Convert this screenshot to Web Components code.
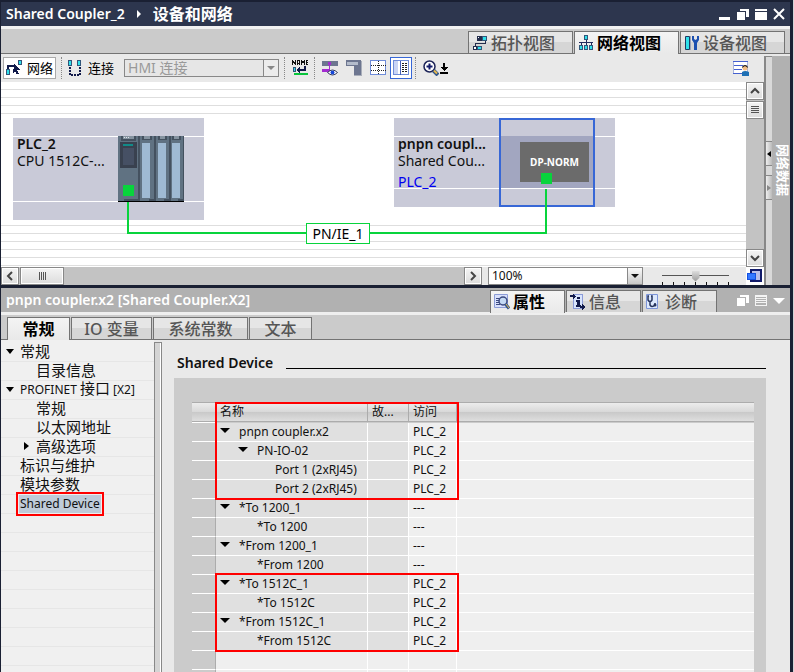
<!DOCTYPE html>
<html lang="zh-CN">
<head>
<meta charset="utf-8">
<title>Shared Coupler_2 - 设备和网络</title>
<style>
  html, body {
    height: 100%;
    margin: 0;
  }
  body {
    overflow: hidden;
    background: #d4d4d6;
    color: #111;
    font-family: "Noto Sans", "Noto Sans CJK SC", sans-serif;
    font-size: 12px;
    line-height: 18px;
    --frame: #1a2033;
    --face: #e9e9e9;
    --bar: #cbcbcb;
    --edge: #737373;
    --net: #08d43c;
    --mark: #f00;
  }
</style>
</head>
<body>
<portal-window>
  <title-bar></title-bar>
  <network-editor></network-editor>
  <inspector-header heading="pnpn coupler.x2 [Shared Coupler.X2]"></inspector-header>
  <inspector-body></inspector-body>
</portal-window>

<script>
const ICONS = {
  topology: `<path fill="#222c4c" d="M5 1h5v5H5zM1 11h5v4H1z"/><path fill="#2fe0ea" d="M10 1h5v4h-5zM6 11h4v4H6z"/><path fill="none" stroke="#222c4c" d="M13.500 5v3h-10v3"/><path fill="none" stroke="#31567a" d="M10.500 1.500h4v4h-4zM5.500 11.500h4v3h-4z"/><path fill="#fff" d="M2 12h2v2H2zM6 2h1v1H6z"/>`,
  network: `<path fill="#2fe0ea" stroke="#31567a" d="M6.500 .5h3v4h-3zM1.500 10.500h3v4h-3zM6.500 10.500h3v4h-3zM11.500 10.500h3v4h-3z"/><path fill="none" stroke="#222c5c" d="M8.500 5v5M3.500 10V7.500h10V10M1 7.500h14"/>`,
  device: `<path fill="#2fe0ea" stroke="#1d3a64" d="M1.500 1.500h4v13h-4z"/><path fill="#9aa3b8" d="M6 1h1v14H6z"/><path fill="#1c50b0" d="M8 1h2v3l1.500 1L13 4V1h2v4l-2 3v7h-3V8L8 5z"/>`,
  netlink: `<path fill="#2fe0ea" stroke="#31567a" d="M12.500 .5h3v4h-3zM.5 9.500h3v5h-3z"/><path fill="none" stroke="#111a4a" stroke-width="2" d="M2 9V6h7"/><path fill="#111a4a" d="M8 4l6 6-3 .5 2 3-2 1-2-3-2 2z"/>`,
  connect: `<path fill="#2fe0ea" stroke="#31567a" d="M1.500 .5h3v5h-3zM10.500 .5h3v5h-3z"/><path fill="none" stroke="#111a4a" stroke-width="2" stroke-dasharray="2 1" d="M3 7v8h10V6"/>`,
  name: `<path fill="none" stroke="#111" d="M.5 5V.5l3 4V0M5.500 5V.5h2V5M5 3.500h3M9.500 5V.5l1.500 2 1.500-2V5M16 .5h-1.500v4H16M14 2.500h2"/><path fill="#2fe0ea" stroke="#31567a" d="M1.500 7.500h2v4h-2z"/><path fill="none" stroke="#111a4a" stroke-width="2" d="M13 6v4H6"/><path fill="#111a4a" d="M8 7v6l-4-3z"/><path fill="#08c43c" d="M2 13h14v2H2z"/>`,
  watch: `<path fill="#6d7690" d="M0 1h16v5H0z"/><path fill="#a22cd0" d="M6 2h3v3H6zM0 9h8v3H0z"/><path fill="none" stroke="#a22cd0" d="M7.500 5v4"/><path fill="#fff" stroke="#333b5c" d="M5.500 12.500q5-5 10 0-5 5-10 0z"/><circle cx="10.500" cy="12.500" r="2" fill="#1446d8"/>`,
  layer: `<path fill="#6d7690" d="M0 0h15v15H8V6H0z"/><path fill="#b4bccb" d="M1 2h11v3H1z"/><path fill="#a9aeba" d="M15 1h1v15H8v-1h7z"/>`,
  grid: `<path fill="#fff" stroke="#6f8cd8" d="M.5 .5h15v14H.5z"/><path fill="none" stroke="#222" stroke-dasharray="1 1" d="M8.500 1v14M1 5.500h15M1 10.500h15"/>`,
  columns: `<path fill="#fff" stroke="#6f8cd8" d="M.5 .5h15v14H.5z"/><path fill="#c9d4f4" d="M1 1h4v13H1z"/><path fill="none" stroke="#4460b8" d="M7.500 1v14"/><path fill="none" stroke="#222" d="M9 3.500h2m1 0h2M9 5.500h2m1 0h2M9 7.500h2m1 0h2M9 9.500h2m1 0h2M9 11.500h2m1 0h2"/>`,
  zoom: `<circle cx="6.500" cy="6.500" r="5.500" fill="#fff" stroke="#1c2458" stroke-width="1.500"/><path fill="none" stroke="#111a6a" stroke-width="2" d="M6.500 3.500v6M3.500 6.500h6"/><path stroke="#31568a" stroke-width="4" d="M10.500 10.500L15 15"/><path stroke="#e8b84c" stroke-width="2" d="M11 10.500l3 3"/>`,
  drop: `<path fill="#000" d="M3 0h2v4h3L4 8 0 4h3zM0 9h8v2H0z"/>`,
  user: `<path fill="#fff" stroke="#a8b4dc" d="M.5 1.500h14v12H.5z"/><path fill="none" stroke="#4460d0" d="M0 1.500h15M1 5.500h9M1 9.500h8M0 13.500h9"/><circle cx="12" cy="8" r="2.500" fill="#f2bd84"/><path fill="#222" d="M9 8c0-4 6-4 6 0l-3-2z"/><path fill="#1f70b4" d="M9 16v-4q3-2 7 0v4z"/>`,
  overview: `<path fill="#b9bde8" stroke="#111a6a" stroke-width="2" d="M4 2h10v11H4z"/><path fill="#3478ff" stroke="#1450e0" d="M.5 5.500h8v6h-8z"/>`,
  properties: `<path fill="#d8e0fc" stroke="#8c9cd8" d="M.5 .5h13v13H.5z"/><path fill="none" stroke="#3c4a80" d="M2 4.500h4M2 6.500h3M2 8.500h3M2 10.500h4"/><circle cx="9" cy="7" r="4" fill="#c4daf4" stroke="#3c4a80" stroke-width="1.500"/><path stroke="#31568a" stroke-width="3" d="M11.500 10l3.500 4.500"/><path stroke="#e8b84c" d="M12 10l3 4"/>`,
  info: `<path fill="#d8e4fc" stroke="#8c9cd8" d="M3.500 .5h9v14h-9z"/><path fill="#111a4a" d="M7 3h3v2H7zM6 6h4v5h1v2H6v-2h1V8H6zM0 1h3V0l3 2-3 3V3H0zM12 10l4 3-4 3v-2h-2v-2h2z"/>`,
  diag: `<path fill="#dce8fc" stroke="#7c94d8" d="M.5 .5h11v14H.5z"/><path fill="none" stroke="#26335c" stroke-width="1.500" d="M3 2H2v4q2 3 4 0V2H5M4 8v3q2 3 5 0V9"/><circle cx="9" cy="11" r="1.500" fill="#26335c"/>`,
  minimize: `<path fill="#fff" d="M0 9h11v3H0z"/>`,
  restore: `<path fill="#fff" d="M0 4h8v8H0zM3 1h9v8H9V3H3z"/>`,
  maximize: `<path fill="#fff" d="M0 1h12v2H0zM0 4h12v8H0z"/>`,
  close: `<path fill="none" stroke="#fff" stroke-width="2" d="M1 1l10 10M11 1L1 11"/>`,
  list: `<path fill="none" stroke="#f4f4f4" d="M.5 1.500h11v10H.5zM1 4.500h11M1 6.500h11M1 8.500h11M1 2.500h11"/>`,
  collapse: `<path fill="#fff" d="M0 4h12l-6 6z"/>`,
  cpu: `<path fill="#607282" d="M0 0h66v66H0z"/><path fill="#44515f" d="M20 0h2v66h-2zM36 0h2v66h-2zM51 0h2v66h-2zM65 0h1v66h-1zM3 0h15v5H3zM24 0h10v4H24zM40 0h9v4h-9zM54 0h9v4h-9zM6 63h14v2H6zM31 63h7v2h-7zM46 63h7v2h-7zM60 63h6v2h-6z"/><path fill="#8593a0" d="M5 0h11v3H5zM26 0h6v3h-6zM42 0h5v3h-5zM56 0h5v3h-5z"/><path fill="#dde4ea" d="M6 1h1v1H6zM8 1h1v1H8zM10 1h1v1h-1z"/><path fill="#39414f" d="M2 6h17v26H2z"/><path fill="#128a88" d="M5 8h10v2H5z"/><path fill="#465064" d="M5 12h11v17H5z"/><path fill="#9fbad3" d="M24 7h8v55h-8zM40 7h8v55h-8zM54 7h8v55h-8z"/><path fill="#08d43c" d="M5 49h11v11H5z"/><path fill="#000" d="M0 65h66v1H0z"/>`
}
const SIZES = { cpu: [66, 66], drop: [8, 11], minimize: [12, 12], restore: [12, 12], maximize: [12, 12], close: [12, 12], list: [12, 12], collapse: [12, 12] }
const SMOOTH = ['zoom', 'close', 'device', 'user', 'properties', 'diag', 'watch', 'collapse']

// Clones a template string into an open shadow root on construction
function define(name, html, setup) {
  const template = document.createElement('template')
  template.innerHTML = html
  customElements.define(name, class extends HTMLElement {
    constructor() {
      super();
      this.attachShadow({ mode: 'open' });
      this.shadowRoot.append(template.content.cloneNode(true))
    }

    connectedCallback() {
      if (setup) setup(this, this.shadowRoot)
    }
  })
}

define('portal-icon', `
  <style>
    :host { display: block; flex: none; }
    svg { display: block; }
  </style>
`, (host, root) => {
  const name = host.getAttribute('name')
  const [w, h] = SIZES[name] ?? [16, 16]
  const shape = SMOOTH.includes(name) ? 'auto' : 'crispEdges'
  root.querySelector('svg')?.remove()
  root.innerHTML += `<svg width="${w}" height="${h}" viewBox="0 0 ${w} ${h}" shape-rendering="${shape}" aria-hidden="true">${ICONS[name]}</svg>`
})

define('portal-window', `
  <style>
    :host {
      display: flex;
      flex-direction: column;
      box-sizing: border-box;
      height: 100vh;
      margin-right: 1px;
      border: solid var(--frame);
      border-width: 2px 3px 0 1px;
      background: var(--face);
    }
  </style>
  <slot></slot>
`)

define('title-bar', `
  <style>
    :host {
      display: flex;
      align-items: center;
      flex: none;
      height: 24px;
      padding: 0 5px;
      border-bottom: 3px solid #f1f1f1;
      background: #2d364e;
      color: #fff;
    }
    h1 {
      display: flex;
      align-items: center;
      gap: 12px;
      flex: 1;
      margin: 0;
      font-size: 14px;
      font-weight: 600;
    }
    .view { font-size: 16px; }
    i {
      border: 4px solid transparent;
      border-left-color: #fff;
      border-right: 0;
    }
    .controls { display: flex; gap: 6px; }
    button { padding: 0; border: 0; background: none; }
  </style>
  <h1><span>Shared Coupler_2</span><i></i><span class="view">设备和网络</span></h1>
  <div class="controls">
    <button aria-label="最小化"><portal-icon name="minimize"></portal-icon></button>
    <button aria-label="还原"><portal-icon name="restore"></portal-icon></button>
    <button aria-label="最大化"><portal-icon name="maximize"></portal-icon></button>
    <button aria-label="关闭"><portal-icon name="close"></portal-icon></button>
  </div>
`)

define('portal-tab', `
  <style>
    :host { display: block; flex: none; }
    button {
      display: flex;
      align-items: center;
      gap: 3px;
      box-sizing: border-box;
      width: 100%;
      height: 22px;
      padding: 0 3px;
      border: 1px solid var(--edge);
      border-bottom: 0;
      background: linear-gradient(#e6e6e6 0 10px, #d6d6d6 10px);
      color: #555;
      font: 500 16px/20px "Noto Sans", "Noto Sans CJK SC", sans-serif;
      white-space: nowrap;
    }
    :host(:not([icon])) button { justify-content: center; }
    :host([selected]) { position: relative; z-index: 1; margin-bottom: -1px; }
    :host([selected]) button {
      height: 23px;
      background: linear-gradient(#f4f4f4, var(--face));
      color: #000;
      font-weight: 700;
    }
  </style>
  <button role="tab"><slot></slot></button>
`, (host, root) => {
  const button = root.querySelector('button')
  const icon = host.getAttribute('icon')
  button.setAttribute('aria-selected', host.hasAttribute('selected'))
  if (icon && !button.querySelector('portal-icon')) {
    button.insertAdjacentHTML('afterbegin', `<portal-icon name="${icon}"></portal-icon>`)
  }
})

define('portal-select', `
  <style>
    :host { display: grid; }
    select, i { grid-area: 1 / 1; }
    select {
      appearance: none;
      box-sizing: border-box;
      width: 100%;
      height: 18px;
      padding: 0 18px 0 3px;
      border: 1px solid #888;
      border-radius: 0;
      background: #fff;
      color: #111;
      font: inherit;
      line-height: 16px;
    }
    select:disabled { background: #e6e6e6; color: #999; opacity: 1; }
    i {
      display: grid;
      place-items: center;
      justify-self: end;
      box-sizing: border-box;
      width: 16px;
      height: 18px;
      border: 1px solid #888;
      background: linear-gradient(#fafafa, #c8c8c8);
      pointer-events: none;
    }
    i::after {
      content: "";
      border: 4px solid transparent;
      border-top-color: #111;
      border-bottom: 0;
    }
    :host([disabled]) i { background: #ececec; }
    :host([disabled]) i::after { border-top-color: #888; }
  </style>
  <select></select><i></i>
`, (host, root) => {
  const select = root.querySelector('select')
  select.innerHTML = `<option>${host.getAttribute('value')}</option>`
  select.disabled = host.hasAttribute('disabled')
  select.setAttribute('aria-label', host.getAttribute('label'))
})

define('network-toolbar', `
  <style>
    :host {
      display: flex;
      align-items: center;
      gap: 5px;
      flex: none;
      box-sizing: border-box;
      height: 28px;
      padding: 0 14px 0 2px;
      background: var(--face);
    }
    button {
      display: flex;
      align-items: center;
      justify-content: center;
      box-sizing: border-box;
      width: 19px;
      height: 22px;
      padding: 0;
      border: 0;
      background: none;
      color: #000;
      font: 13px/18px "Noto Sans CJK SC", sans-serif;
    }
    .text { gap: 5px; width: auto; white-space: nowrap; }
    .pressed { padding: 0 2px; border: 1px solid #aaa; background: #fff; }
    .toggled { width: 22px; margin: 0 -2px; border: 1px solid #3767d6; background: #fff; }
    .group { display: flex; }
    .group button:last-child { width: 8px; }
    hr { height: 22px; margin: 0; border: 0; border-left: 1px dotted #888; }
    portal-select { width: 155px; margin-left: 5px; font-size: 14px; }
    .end { margin-left: auto; }
  </style>
  <button class="text pressed"><portal-icon name="netlink"></portal-icon>网络</button>
  <hr>
  <button class="text"><portal-icon name="connect"></portal-icon>连接</button>
  <portal-select disabled label="连接类型" value="HMI 连接"></portal-select>
  <hr>
  <button aria-label="设备名称"><portal-icon name="name"></portal-icon></button>
  <hr>
  <button aria-label="显示关系"><portal-icon name="watch"></portal-icon></button>
  <button aria-label="显示标签"><portal-icon name="layer"></portal-icon></button>
  <button aria-label="分页"><portal-icon name="grid"></portal-icon></button>
  <button class="toggled" aria-label="表格"><portal-icon name="columns"></portal-icon></button>
  <hr>
  <div class="group">
    <button aria-label="放大"><portal-icon name="zoom"></portal-icon></button>
    <button aria-label="缩放选项"><portal-icon name="drop"></portal-icon></button>
  </div>
  <button class="end" aria-label="用户设置"><portal-icon name="user"></portal-icon></button>
`)

define('scroll-rail', `
  <style>
    :host { display: flex; background: #c3c3c3; }
    :host([vertical]) { flex-direction: column; width: 18px; }
    :host(:not([vertical])) { height: 18px; }
    button {
      display: grid;
      place-items: center;
      flex: none;
      box-sizing: border-box;
      width: 18px;
      height: 18px;
      padding: 0;
      border: 1px solid #888;
      background: linear-gradient(#f4f4f4, #dcdcdc);
      box-shadow: inset 0 0 0 1px #fff;
    }
    .thumb { margin: 0 auto 0 1px; }
    :host(:not([vertical])) .thumb { width: 44px; }
    :host([vertical]) .thumb { margin: 1px 0 auto; }
    .thumb svg { transform: rotate(90deg); }
    :host([vertical]) svg { transform: rotate(90deg); }
    :host([vertical]) .thumb svg { transform: none; }
  </style>
  <button aria-label="向前"><svg width="10" height="10"><path d="M7 1L3 5l4 4" fill="none" stroke="#444" stroke-width="2"/></svg></button>
  <button class="thumb" aria-label="滑块"><svg width="10" height="10" shape-rendering="crispEdges"><path d="M1 1.500h8M1 3.500h8M1 5.500h8M1 7.500h8" stroke="#555"/></svg></button>
  <button aria-label="向后"><svg width="10" height="10"><path d="M3 1l4 4-4 4" fill="none" stroke="#444" stroke-width="2"/></svg></button>
`)

define('device-node', `
  <style>
    :host {
      position: absolute;
      display: flex;
      box-sizing: border-box;
      background:
        linear-gradient(#fff, #fff) 0 18px / 100% 1px no-repeat,
        linear-gradient(#fff, #fff) 0 calc(100% - 18px) / 100% 1px no-repeat,
        #c9cad8;
    }
    .labels {
      box-sizing: border-box;
      width: 105px;
      padding: 17px 0 0 4px;
      font-size: 14px;
      line-height: 17px;
      white-space: nowrap;
    }
    strong, span { display: block; }
    strong { font-weight: 600; }
    slot[name=link] { display: block; margin-top: 4px; }
  </style>
  <div class="labels"><strong></strong><span></span><slot name="link"></slot></div>
  <slot></slot>
`, (host, root) => {
  root.querySelector('strong').textContent = host.getAttribute('name')
  root.querySelector('span').textContent = host.getAttribute('type')
})

// Free canvas: stations and the subnet between them keep their own coordinates
define('network-canvas', `
  <style>
    :host {
      position: relative;
      display: block;
      overflow: hidden;
      background:
        linear-gradient(transparent 32px, #fff 32px 143px, transparent 143px),
        repeating-linear-gradient(#fff 0 7px, #dedede 7px 8px);
    }
    .plc { left: 12px; top: 36px; width: 191px; height: 102px; }
    .plc portal-icon { margin-top: 18px; }
    .coupler { left: 393px; top: 36px; width: 221px; height: 89px; }
    .module {
      box-sizing: border-box;
      width: 96px;
      padding: 22px 0 0 19px;
      border: 2px solid #3767d6;
      background: linear-gradient(#a2a6c0, #a2a6c0) 0 16px / 100% 52px no-repeat;
    }
    .norm {
      width: 69px;
      height: 40px;
      background: #6b6b6b;
      color: #fff;
      font-size: 10px;
      font-weight: 700;
      line-height: 40px;
      text-align: center;
    }
    a { color: #0000f0; text-decoration: none; }
    .port { position: absolute; left: 540px; top: 91px; width: 11px; height: 11px; background: var(--net); }
    .wire {
      position: absolute;
      left: 126px;
      top: 120px;
      box-sizing: border-box;
      width: 420px;
      height: 32px;
      border: solid var(--net);
      border-width: 0 0 2px 2px;
    }
    .riser { position: absolute; left: 544px; top: 107px; width: 2px; height: 45px; background: var(--net); }
    .subnet {
      position: absolute;
      left: 305px;
      top: 141px;
      box-sizing: border-box;
      width: 64px;
      height: 21px;
      border: 1px solid var(--net);
      background: #fff;
      color: #000;
      font-size: 14px;
      line-height: 20px;
      text-align: center;
    }
  </style>
  <device-node class="plc" name="PLC_2" type="CPU 1512C-...">
    <portal-icon name="cpu"></portal-icon>
  </device-node>
  <device-node class="coupler" name="pnpn coupl..." type="Shared Cou...">
    <a slot="link" href="#plc_2">PLC_2</a>
    <div class="module"><div class="norm">DP-NORM</div></div>
  </device-node>
  <div class="wire"></div>
  <div class="riser"></div>
  <div class="port"></div>
  <div class="subnet">PN/IE_1</div>
`)

define('zoom-bar', `
  <style>
    :host { display: flex; align-items: center; height: 18px; background: var(--face); }
    scroll-rail { flex: 1; }
    portal-select { width: 155px; margin: 0 19px 0 6px; }
    input {
      appearance: none;
      width: 67px;
      height: 18px;
      margin: 0 17px 0 0;
      background:
        linear-gradient(#555, #555) 0 8px / 100% 1px no-repeat,
        repeating-linear-gradient(90deg, #111 0 1px, transparent 1px 11px) 0 100% / 100% 3px no-repeat;
    }
    input::-webkit-slider-thumb {
      appearance: none;
      width: 8px;
      height: 11px;
      background: linear-gradient(#ddd, #999);
      clip-path: polygon(0 0, 100% 0, 100% 65%, 50% 100%, 0 65%);
    }
    button { width: 18px; height: 18px; padding: 0 1px; border: 0; background: #fff; }
  </style>
  <scroll-rail></scroll-rail>
  <portal-select label="缩放" value="100%"></portal-select>
  <input type="range" aria-label="缩放比例" min="0" max="100" value="50">
  <button aria-label="总览"><portal-icon name="overview"></portal-icon></button>
`)

define('side-dock', `
  <style>
    :host { display: flex; width: 26px; padding-top: 2px; }
    .splitter {
      box-sizing: border-box;
      width: 8px;
      padding-top: 84px;
      border: solid #888;
      border-width: 1px 0 0 2px;
      background: #d9d9d9;
    }
    .splitter button {
      display: grid;
      place-items: center;
      box-sizing: border-box;
      width: 100%;
      height: 25px;
      margin-bottom: 9px;
      padding: 0;
      border: solid #888;
      border-width: 1px 0;
      background: linear-gradient(90deg, #eee, #bbb);
    }
    i { border: 3px solid transparent; }
    .in i { border-right: 4px solid #000; border-left: 0; }
    .out i { border-left: 4px solid #888; border-right: 0; }
    .label {
      flex: 1;
      padding: 88px 0 0 4px;
      border: 0;
      background: #b1b1b1;
      color: #fff;
      font: 700 13px/14px "Noto Sans CJK SC", sans-serif;
      text-align: start;
      writing-mode: vertical-rl;
      text-orientation: sideways;
    }
  </style>
  <div class="splitter">
    <button class="in" aria-label="展开"><i></i></button>
    <button class="out" aria-label="收起"><i></i></button>
  </div>
  <button class="label">网络数据</button>
`)

define('network-editor', `
  <style>
    :host { display: block; flex: none; border-bottom: 3px solid var(--frame); }
    nav {
      display: flex;
      align-items: flex-end;
      justify-content: flex-end;
      gap: 1px;
      height: 24px;
      padding-right: 5px;
      border-bottom: 1px solid var(--edge);
      background: var(--bar);
    }
    nav portal-tab { width: 105px; }
    .area { display: flex; }
    .main { flex: 1; min-width: 0; }
    .view { display: flex; height: 185px; }
    network-canvas { flex: 1; }
  </style>
  <nav role="tablist">
    <portal-tab icon="topology">拓扑视图</portal-tab>
    <portal-tab icon="network" selected>网络视图</portal-tab>
    <portal-tab icon="device">设备视图</portal-tab>
  </nav>
  <div class="area">
    <div class="main">
      <network-toolbar></network-toolbar>
      <div class="view">
        <network-canvas></network-canvas>
        <scroll-rail vertical></scroll-rail>
      </div>
      <zoom-bar></zoom-bar>
    </div>
    <side-dock></side-dock>
  </div>
`)

define('inspector-header', `
  <style>
    :host { display: block; flex: none; }
    .top {
      display: flex;
      align-items: flex-end;
      height: 24px;
      padding: 0 5px;
      border-bottom: 3px solid #efefef;
      background: #b1b1b1;
    }
    h2 {
      flex: 1;
      margin: 0;
      color: #fff;
      font-size: 14px;
      font-weight: 600;
      line-height: 24px;
      white-space: nowrap;
    }
    .tabs { display: flex; align-items: flex-end; gap: 1px; }
    .top portal-tab { width: 75px; }
    .controls { display: flex; align-self: center; gap: 6px; margin-left: 20px; }
    .controls button { padding: 0; border: 0; background: none; }
    .sub {
      display: flex;
      align-items: flex-end;
      gap: 1px;
      height: 24px;
      padding-left: 6px;
      border-bottom: 1px solid var(--edge);
      background: var(--bar);
    }
    .narrow { width: 63px; }
    .mid { width: 81px; }
    .wide { width: 95px; }
  </style>
  <div class="top">
    <h2></h2>
    <div class="tabs" role="tablist">
      <portal-tab icon="properties" selected>属性</portal-tab>
      <portal-tab icon="info">信息</portal-tab>
      <portal-tab icon="diag">诊断</portal-tab>
    </div>
    <div class="controls">
      <button aria-label="浮动"><portal-icon name="restore"></portal-icon></button>
      <button aria-label="列表"><portal-icon name="list"></portal-icon></button>
      <button aria-label="折叠"><portal-icon name="collapse"></portal-icon></button>
    </div>
  </div>
  <div class="sub" role="tablist">
    <portal-tab class="narrow" selected>常规</portal-tab>
    <portal-tab class="mid">IO 变量</portal-tab>
    <portal-tab class="wide">系统常数</portal-tab>
    <portal-tab class="narrow">文本</portal-tab>
  </div>
`, (host, root) => {
  root.querySelector('h2').textContent = host.getAttribute('heading')
})

define('tree-item', `
  <style>
    :host {
      display: flex;
      align-items: center;
      box-sizing: border-box;
      height: 19px;
      padding: 0 0 2px 5px;
      border-bottom: 1px solid #e6e6e6;
    }
    :host([level="1"]) { padding-left: 21px; }
    :host([selected]) { padding-bottom: 0; }
    i { flex: none; width: 14px; }
    i::before { content: ""; display: block; width: 0; }
    :host([state=open]) i::before { border: 4px solid transparent; border-top: 5px solid #000; border-bottom: 0; }
    :host([state=closed]) i::before { margin-left: 2px; border: 4px solid transparent; border-left: 5px solid #000; border-right: 0; }
    a { color: #111; font-size: 15px; line-height: 18px; text-decoration: none; white-space: nowrap; }
    :host([latin]) a { font-size: 12px; }
    :host([selected]) a {
      margin-left: -2px;
      padding: 0 1px;
      outline: 2px solid var(--mark);
      border: 1px solid #eee;
      background: #bfcbd9;
    }
    ::slotted(b) { font-size: 15px; font-weight: 400; }
  </style>
  <i></i><a href="#"><slot></slot></a>
`)

define('settings-tree', `
  <style>
    :host {
      display: block;
      padding-top: 3px;
      background: repeating-linear-gradient(#f0f0f0 0 18px, #e6e6e6 18px 19px) 0 3px;
    }
  </style>
  <tree-item state="open">常规</tree-item>
  <tree-item level="1">目录信息</tree-item>
  <tree-item state="open" latin>PROFINET <b>接口</b> [X2]</tree-item>
  <tree-item level="1">常规</tree-item>
  <tree-item level="1">以太网地址</tree-item>
  <tree-item level="1" state="closed">高级选项</tree-item>
  <tree-item>标识与维护</tree-item>
  <tree-item>模块参数</tree-item>
  <tree-item latin selected>Shared Device</tree-item>
`)

const ROWS = [
  [0, true, 'pnpn coupler.x2', 'PLC_2'],
  [1, true, 'PN-IO-02', 'PLC_2'],
  [2, false, 'Port 1 (2xRJ45)', 'PLC_2'],
  [2, false, 'Port 2 (2xRJ45)', 'PLC_2'],
  [0, true, '*To 1200_1', '---'],
  [1, false, '*To 1200', '---'],
  [0, true, '*From 1200_1', '---'],
  [1, false, '*From 1200', '---'],
  [0, true, '*To 1512C_1', 'PLC_2'],
  [1, false, '*To 1512C', 'PLC_2'],
  [0, true, '*From 1512C_1', 'PLC_2'],
  [1, false, '*From 1512C', 'PLC_2']
]
const EMPTY_ROWS = 12

define('access-table', `
  <style>
    :host { position: relative; display: block; }
    table { width: 100%; border-collapse: separate; border-spacing: 0; table-layout: fixed; }
    th, td {
      box-sizing: border-box;
      height: 19px;
      padding: 0 0 0 4px;
      border: solid #fff;
      border-width: 0 1px 1px 0;
      background: #efefef;
      line-height: 18px;
      text-align: left;
      white-space: nowrap;
      overflow: hidden;
    }
    th {
      border: solid #acacac;
      border-width: 1px 1px 1px 0;
      background: linear-gradient(#ececec, #d8d8d8 50%, #c8c8c8 50%, #dedede);
      font-weight: 400;
    }
    th:last-child, td:last-child { border-right: 0; }
    thead::after { content: ""; display: table-row; height: 1px; background: #fff; }
    td:first-child { border-right-color: #acacac; background: var(--bar); }
    .filled td:nth-child(2), .filled td:nth-child(3) { background: #e0e0e0; }
    .filled td:nth-child(2) > div { display: flex; align-items: center; padding-left: calc(var(--level) * 18px); }
    i { flex: none; width: 19px; padding-bottom: 3px; }
    .open i::before { content: ""; display: block; width: 0; border: 5px solid transparent; border-top-color: #000; border-bottom: 0; }
    .mark { position: absolute; left: 23px; width: 244px; box-sizing: border-box; border: 2px solid var(--mark); pointer-events: none; }
    .station { top: 0; height: 98px; }
    .transfer { top: 171px; height: 79px; }
  </style>
  <table>
    <colgroup><col style="width:24px"><col style="width:152px"><col style="width:41px"><col style="width:48px"><col></colgroup>
    <thead><tr><th></th><th>名称</th><th>故...</th><th>访问</th><th></th></tr></thead>
    <tbody></tbody>
  </table>
  <div class="mark station"></div>
  <div class="mark transfer"></div>
`, (host, root) => {
  const filled = ROWS.map(([level, open, name, access]) => `
    <tr class="filled${open ? ' open' : ''}" style="--level:${level}">
      <td></td><td><div><i></i>${name}</div></td><td></td><td>${access}</td><td></td>
    </tr>`)
  const empty = '<tr><td></td><td></td><td></td><td></td><td></td></tr>'.repeat(EMPTY_ROWS)
  root.querySelector('tbody').innerHTML = filled.join('') + empty
})

define('inspector-body', `
  <style>
    :host { display: flex; flex: 1; min-height: 0; overflow: hidden; }
    settings-tree { flex: none; width: 153px; }
    .splitter {
      flex: none;
      box-sizing: border-box;
      width: 8px;
      margin-top: 2px;
      border: 1px solid #888;
      border-bottom: 0;
      background: #d4d4d4;
      box-shadow: inset -1px 0 #fff;
    }
    section {
      display: flex;
      flex-direction: column;
      flex: 1;
      min-width: 0;
      padding: 12px 24px 0 12px;
    }
    header { display: flex; align-items: center; gap: 13px; padding: 0 0 4px 3px; }
    h3 { margin: 0; font-size: 14px; font-weight: 600; line-height: 22px; }
    hr { flex: 1; margin: 10px 0 0; border: 0; border-top: 1px solid #000; }
    .panel { flex: 1; min-height: 0; padding: 24px 12px 0 18px; background: var(--bar); }
  </style>
  <settings-tree></settings-tree>
  <div class="splitter"></div>
  <section>
    <header><h3>Shared Device</h3><hr></header>
    <div class="panel"><access-table></access-table></div>
  </section>
`)
</script>
</body>
</html>
